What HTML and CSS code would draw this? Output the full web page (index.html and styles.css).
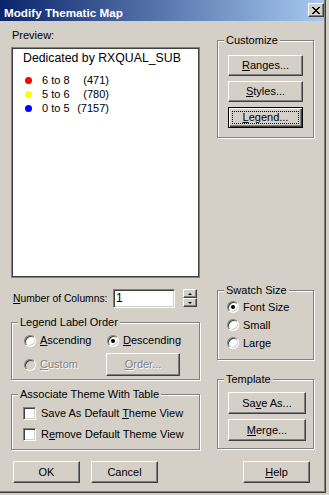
FILE: index.html
```html
<!DOCTYPE html>
<html>
<head>
<meta charset="utf-8">
<title>Modify Thematic Map</title>
<link rel="stylesheet" href="styles.css">
</head>
<body>
<div class="dialog">
  <div class="titlebar">
    <span class="title">Modify Thematic Map</span>
    <span class="close"><svg width="8" height="7" viewBox="0 0 8 7"><path d="M0 0h2v1H0zM6 0h2v1H6zM1 1h2v1H1zM5 1h2v1H5zM2 2h4v1H2zM3 3h2v1H3zM2 4h4v1H2zM1 5h2v1H1zM5 5h2v1H5zM0 6h2v1H0zM6 6h2v1H6z" fill="#000"/></svg></span>
  </div>
  <div class="main">
    <div class="col-left">
      <div class="preview-label">Preview:</div>
      <div class="preview">
        <div class="preview-title">Dedicated by RXQUAL_SUB</div>
        <div class="legend-list">
          <div class="legend-row"><span class="dot red"></span><span class="range">6 to 8</span><span class="count">(471)</span></div>
          <div class="legend-row"><span class="dot yellow"></span><span class="range">5 to 6</span><span class="count">(780)</span></div>
          <div class="legend-row"><span class="dot blue"></span><span class="range">0 to 5</span><span class="count">(7157)</span></div>
        </div>
      </div>
      <div class="columns-row">
        <span class="cols-label"><u>N</u>umber of Columns:</span>
        <span class="num-input">1</span>
        <span class="spin">
          <span class="spin-btn"><span class="arrow-up"></span></span>
          <span class="spin-btn"><span class="arrow-down"></span></span>
        </span>
      </div>
      <div class="group order-group">
        <span class="group-title">Legend Label Order</span>
        <div class="radio-row first">
          <span class="opt"><span class="radio"></span><span><u>A</u>scending</span></span>
          <span class="opt"><span class="radio on"></span><span><u>D</u>escending</span></span>
        </div>
        <div class="radio-row second">
          <span class="opt custom"><span class="radio disabled"></span><span class="disabled-text"><u>C</u>ustom</span></span>
          <span class="btn order-btn disabled-text"><span><u>O</u>rder...</span></span>
        </div>
      </div>
      <div class="group assoc-group">
        <span class="group-title">Associate Theme With Table</span>
        <div class="check-row first"><span class="check"></span><span>Save As Default <u>T</u>heme View</span></div>
        <div class="check-row second"><span class="check"></span><span>R<u>e</u>move Default Theme View</span></div>
      </div>
    </div>
    <div class="col-right">
      <div class="group customize">
        <span class="group-title">Customize</span>
        <span class="btn side-btn first"><span><u>R</u>anges...</span></span>
        <span class="btn side-btn"><span><u>S</u>tyles...</span></span>
        <span class="btn side-btn default"><span class="focus"><u>L</u>egend...</span></span>
      </div>
      <div class="group swatch">
        <span class="group-title">Swatch Size</span>
        <div class="swatch-list">
          <div class="swatch-row"><span class="radio on"></span><span>Font Size</span></div>
          <div class="swatch-row"><span class="radio"></span><span>Small</span></div>
          <div class="swatch-row"><span class="radio"></span><span>Large</span></div>
        </div>
      </div>
      <div class="group template">
        <span class="group-title">Template</span>
        <span class="btn tpl-btn first"><span>Sa<u>v</u>e As...</span></span>
        <span class="btn tpl-btn"><span><u>M</u>erge...</span></span>
      </div>
    </div>
  </div>
  <div class="footer">
    <span class="btn foot-btn">OK</span>
    <span class="btn foot-btn cancel">Cancel</span>
    <span class="btn foot-btn help"><span><u>H</u>elp</span></span>
  </div>
</div>
</body>
</html>
```
FILE: styles.css
```css
* { box-sizing: border-box; }

body {
  margin: 0;
  background: #d4d0c8;
  font-family: "Liberation Sans", Arial, sans-serif;
  font-size: 11px;
  color: #000;
}

u { text-decoration: underline; text-underline-offset: 1px; }

.dialog {
  width: 326px;
  height: 493px;
  background: #d4d0c8;
  border-right: 1px solid #404040;
  border-bottom: 1px solid #404040;
  box-shadow: inset -1px -1px #808080;
  display: flex;
  flex-direction: column;
}

.titlebar {
  height: 21px;
  margin-right: 1px;
  background: linear-gradient(to right, #0a246a, #a6caf0);
  display: flex;
  align-items: flex-start;
}

.title {
  color: #fff;
  font-weight: bold;
  font-size: 11.7px;
  line-height: 13px;
  padding: 6px 0 0 4px;
}

.close {
  margin: 3px 0 0 auto;
  width: 16px;
  height: 14px;
  background: #d4d0c8;
  border: 1px solid;
  border-color: #fff #404040 #404040 #fff;
  box-shadow: inset -1px -1px #808080;
  display: flex;
  align-items: center;
  justify-content: center;
}

.close svg { display: block; }

.main {
  display: grid;
  grid-template-columns: 189px 97px;
  column-gap: 17px;
  padding-left: 11px;
  align-items: start;
}

.col-left, .col-right {
  display: flex;
  flex-direction: column;
}

.preview-label {
  margin: 8px 0 0 1px;
  line-height: 13px;
}

.preview {
  margin-top: 5px;
  height: 231px;
  background: #fff;
  border: 1px solid #808080;
  box-shadow: inset 1px 1px #404040, inset -1px -1px #404040;
  padding: 3px 0 0 11px;
}

.preview-title {
  font-size: 12.3px;
  line-height: 15px;
}

.legend-list {
  margin-top: 7px;
  width: 86px;
}

.legend-row {
  display: flex;
  align-items: center;
  height: 14px;
  line-height: 14px;
}

.dot {
  width: 7px;
  height: 7px;
  border-radius: 50%;
  margin: 0 10px 0 2px;
  flex: none;
}
.dot.red { background: #ff0000; }
.dot.yellow { background: #ffff00; }
.dot.blue { background: #0000ff; }

.count { margin-left: auto; }

.columns-row {
  margin-top: 11px;
  height: 19px;
  display: flex;
  align-items: center;
}

.cols-label {
  width: 102px;
  flex: none;
  padding-left: 2px;
  line-height: 13px;
  white-space: nowrap;
  font-size: 10.3px;
}

.num-input {
  width: 62px;
  height: 19px;
  flex: none;
  background: #fff;
  border: 1px solid;
  border-color: #808080 #fff #fff #808080;
  box-shadow: inset 1px 1px #404040, inset -1px -1px #d4d0c8;
  font-size: 12px;
  line-height: 17px;
  padding-left: 2px;
}

.spin {
  margin-left: 8px;
  width: 14px;
  height: 18px;
  display: flex;
  flex-direction: column;
  align-self: flex-start;
}

.spin-btn {
  height: 9px;
  background: #d4d0c8;
  border: 1px solid;
  border-color: #fff #404040 #404040 #fff;
  box-shadow: inset -1px -1px #808080;
  display: flex;
  align-items: center;
  justify-content: center;
}

.arrow-up {
  width: 0;
  height: 0;
  border-left: 2px solid transparent;
  border-right: 2px solid transparent;
  border-bottom: 2px solid #000;
}

.arrow-down {
  width: 0;
  height: 0;
  border-left: 2px solid transparent;
  border-right: 2px solid transparent;
  border-top: 2px solid #000;
}

.group {
  border: 1px solid #808080;
  box-shadow: inset 1px 1px #fff, 1px 1px #fff;
  display: flex;
  flex-direction: column;
}

.group-title {
  display: block;
  width: fit-content;
  margin: -7px 0 0 6px;
  padding: 0 2px;
  background: #d4d0c8;
  line-height: 13px;
}

.order-group {
  margin-top: 14px;
  padding-bottom: 3px;
}

.radio-row {
  display: flex;
  align-items: center;
  padding-left: 12px;
}
.radio-row.first { margin-top: 5px; height: 13px; }
.radio-row.second { margin-top: 6px; height: 23px; }

.opt {
  display: flex;
  align-items: center;
  width: 83px;
  line-height: 13px;
}
.opt.custom { width: 82px; }

.radio {
  width: 12px;
  height: 12px;
  flex: none;
  border-radius: 50%;
  background: #fff;
  border: 1px solid;
  border-color: #808080 #fff #fff #808080;
  box-shadow: inset 1px 1px #404040, inset -1px -1px #d4d0c8;
  margin-right: 4px;
  display: flex;
  align-items: center;
  justify-content: center;
}
.radio.on::after {
  content: "";
  width: 4px;
  height: 4px;
  border-radius: 50%;
  background: #000;
}
.radio.disabled { background: #d4d0c8; }

.disabled-text {
  color: #808080;
  text-shadow: 1px 1px 0 #fff;
}

.btn {
  display: flex;
  align-items: center;
  justify-content: center;
  background: #d4d0c8;
  border: 1px solid;
  border-color: #fff #404040 #404040 #fff;
  box-shadow: inset -1px -1px #808080;
  line-height: 13px;
  flex: none;
}

.order-btn {
  width: 74px;
  height: 23px;
}

.assoc-group {
  margin-top: 14px;
  padding-bottom: 8px;
}

.check-row {
  display: flex;
  align-items: center;
  height: 13px;
  padding-left: 11px;
  line-height: 13px;
}
.check-row.first { margin-top: 6px; }
.check-row.second { margin-top: 8px; }

.check {
  width: 13px;
  height: 13px;
  flex: none;
  background: #fff;
  border: 1px solid;
  border-color: #808080 #fff #fff #808080;
  box-shadow: inset 1px 1px #404040, inset -1px -1px #d4d0c8;
  margin-right: 5px;
}

.customize {
  margin-top: 19px;
  padding-bottom: 9px;
}

.side-btn {
  width: 75px;
  height: 21px;
  margin: 5px 0 0 10px;
}
.side-btn.first { margin-top: 8px; }

.side-btn.default {
  border: 1px solid #000;
  box-shadow: inset 1px 1px #fff, inset -1px -1px #404040, inset -2px -2px #808080;
  padding: 3px;
  align-items: stretch;
}

.focus {
  flex: 1;
  border: 1px dotted #000;
  display: flex;
  align-items: center;
  justify-content: center;
}

.swatch {
  margin-top: 152px;
  padding-bottom: 7px;
}

.swatch-list {
  margin-top: 1px;
  padding-left: 9px;
}

.swatch-row {
  display: flex;
  align-items: center;
  height: 18px;
  line-height: 13px;
}

.swatch-row .radio { margin-right: 4px; }

.template {
  margin-top: 19px;
  padding-bottom: 7px;
}

.tpl-btn {
  width: 78px;
  height: 22px;
  margin: 5px 0 0 10px;
}
.tpl-btn.first { margin-top: 6px; }

.footer {
  margin-top: 11px;
  padding-left: 13px;
  display: flex;
}

.foot-btn {
  width: 67px;
  height: 22px;
}
.foot-btn.cancel { margin-left: 11px; }
.foot-btn.help { margin-left: 85px; }
```
